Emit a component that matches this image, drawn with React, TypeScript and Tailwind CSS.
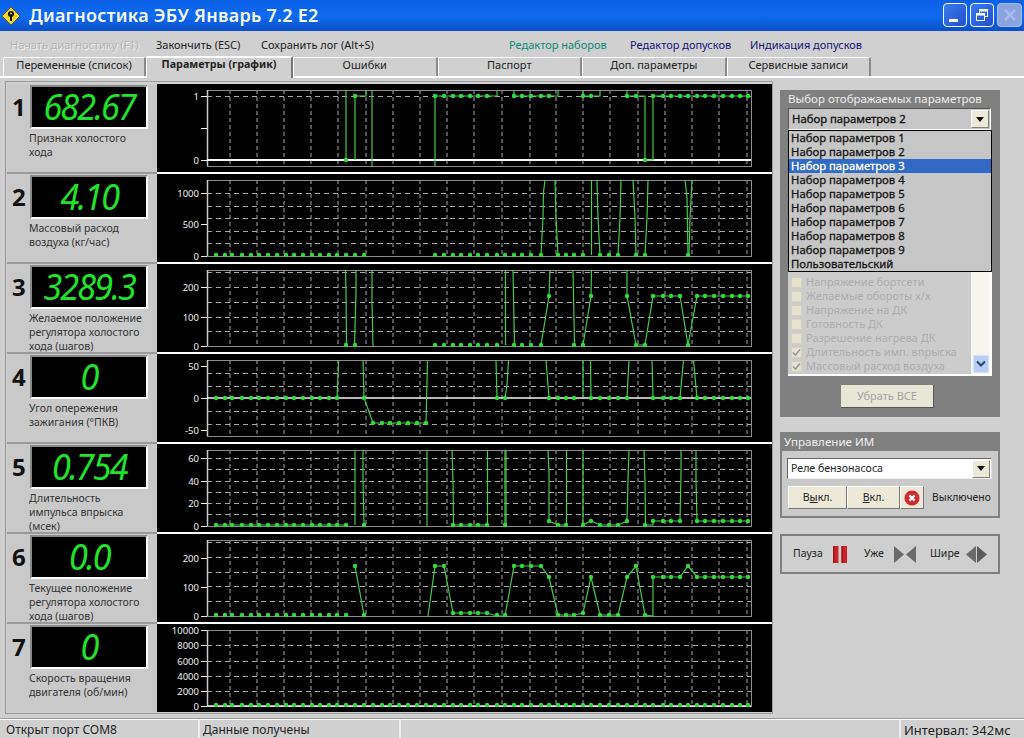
import React from 'react';

// sample positions of the chart, in page pixels
const X = [
  216, 225, 232, 242, 251, 259, 268, 277, 286, 294, 303, 312, 320, 329, 337, 346, 355, 364, 373, 382, 390, 399, 408,
  417, 426, 435, 444, 453, 461, 470, 478, 487, 497, 505, 514, 522, 531, 541, 549, 558, 566, 574, 583, 591, 600, 609,
  618, 627, 636, 645, 653, 663, 671, 680, 688, 697, 705, 714, 723, 732, 740, 748,
];
const GRID_X = [230, 257, 284, 311, 338, 366, 393, 420, 447, 474, 502, 530, 556, 583, 610, 638, 665, 692, 719, 747];
const span = (a: number, b: number) => X.filter((x) => x >= a && x <= b);

type Chart = {
  no: number;
  value: string;
  label: string[];
  top: number;
  bottom: number;
  ticks: { y: number; text?: string }[];
  dashes: number[];
  zero?: { y: number; w: number };
  lines: string[];
  dots: [number, number[]][];
};

const charts: Chart[] = [
  {
    no: 1,
    value: '682.67',
    label: ['Признак холостого', 'хода'],
    top: 90,
    bottom: 166,
    ticks: [{ y: 96, text: '1' }, { y: 128 }, { y: 160, text: '0' }],
    dashes: [96],
    zero: { y: 160, w: 2 },
    lines: [
      '346,160 346,90',
      '355,160 355,96 366,96 366,90',
      '372,90 372,166',
      '435,166 435,96 497,96 497,90',
      '514,90 514,96 558,96 558,90',
      '583,90 583,96 600,96 600,90',
      '627,90 627,96 645,96 645,160 653,160 653,96 748,96',
    ],
    dots: [
      [96, [355, ...span(435, 487), ...span(514, 549), 583, 591, 627, 636, ...span(653, 748)]],
      [160, [346, 645]],
    ],
  },
  {
    no: 2,
    value: '4.10',
    label: ['Массовый расход', 'воздуха (кг/час)'],
    top: 180,
    bottom: 256,
    ticks: [{ y: 193, text: '1000' }, { y: 224, text: '500' }, { y: 256, text: '0' }],
    dashes: [193, 206, 218, 231, 243],
    lines: [
      '541,255 543,218 543.5,192 545,180',
      '555,180 556,218 558,255',
      '591.5,180 591.5,255',
      '597,180 598,218 600,255',
      '621,180 620,218 618,255',
      '633,180 635,218 636,255',
      '648,180 647,218 645,255',
      '685,180 687,198 688,255',
      '692,180 690,218 689,255',
    ],
    dots: [[255, [...span(216, 364), ...span(435, 541), 558, 566, 574, 583, 600, 609, 618, 636, 645, 688]]],
  },
  {
    no: 3,
    value: '3289.3',
    label: ['Желаемое положение', 'регулятора холостого', 'хода (шагов)'],
    top: 270,
    bottom: 346,
    ticks: [{ y: 287, text: '200' }, { y: 317, text: '100' }, { y: 346, text: '0' }],
    dashes: [272, 287, 302, 317, 331],
    lines: [
      '345.5,270 346,292 346.5,346',
      '356,270 356,292 354.5,345',
      '372,270 372,303 373,346',
      '505.5,270 505.5,345',
      '513,270 514.5,345',
      '541,345 549,296 550,270',
      '573,270 574.5,345',
      '583,345 591,296 591.5,270',
      '627,270 627,296 636,345 645,345 653,296 680,296 688,345 697,296 748,296',
    ],
    dots: [
      [345, [346, 355, ...span(435, 497), 514, 522, 531, 541, 574, 583, 636, 645, 688]],
      [296, [549, 591, 627, 653, 663, 671, 680, ...span(697, 748)]],
    ],
  },
  {
    no: 4,
    value: '0',
    label: ['Угол опережения', 'зажигания (°ПКВ)'],
    top: 360,
    bottom: 436,
    ticks: [{ y: 366, text: '50' }, { y: 398, text: '0' }, { y: 430, text: '-50' }],
    dashes: [373, 386, 411, 424],
    zero: { y: 398, w: 1.5 },
    lines: [
      '337,398 338.7,360',
      '363,360 364,398 373,423 426,423 427.5,360',
      '496,360 497,398',
      '505,398 507,385 508.5,360',
      '546,360 549,398',
      '583,360 583,398',
      '590.5,360 591,398',
      '627,398 629,360',
      '652,360 653,398 680,398 683.5,360',
      '693.5,360 697,398',
    ],
    dots: [
      [398, [...span(216, 337), 364, 497, 505, 549, 558, 566, 574, ...span(591, 627), 653, 663, 671, 680, ...span(697, 748)]],
      [423, span(373, 426)],
    ],
  },
  {
    no: 5,
    value: '0.754',
    label: ['Длительность', 'импульса впрыска', '(мсек)'],
    top: 450,
    bottom: 526,
    ticks: [{ y: 458, text: '60' }, { y: 481, text: '40' }, { y: 503, text: '20' }, { y: 526, text: '0' }],
    dashes: [458, 469, 481, 492, 503, 514],
    lines: [
      '216,525 346,525',
      '355,450 355,525',
      '363,450 363,480 364,525',
      '427,450 427,526',
      '452,450 453,483 453.5,525 487,525',
      '487.5,450 487.5,525',
      '505,450 505,525',
      '506,450 506,525',
      '548,450 549,473 549,521 558,525 566,525',
      '566.5,450 566.5,525',
      '583,450 583,525 591,521 600,525 618,525 627,521 628,480 629,450',
      '644,450 645,480 645.5,525 653,525 653,521 680,521 681,473 681,450',
      '696,450 696,480 697,521 748,521',
    ],
    dots: [
      [525, [...span(216, 346), 364, 453, 461, 470, 478, 487, 505, 558, 566, 583, 600, 609, 618, 645]],
      [521, [549, 591, 627, 653, 663, 671, 680, ...span(697, 748)]],
    ],
  },
  {
    no: 6,
    value: '0.0',
    label: ['Текущее положение', 'регулятора холостого', 'хода (шагов)'],
    top: 540,
    bottom: 616,
    ticks: [{ y: 558, text: '200' }, { y: 587, text: '100' }, { y: 616, text: '0' }],
    dashes: [542, 557, 572, 586, 601],
    lines: [
      '355,566 364,615',
      '428,616 435,566 444,566 453,613 487,613 497,616 505,616 514,566 541,566 549,577 558,615 574,615 583,613 591,577 600,615 618,615 627,577 636,566 645,615 653,616 653,577 680,577 688,566 697,577 748,577',
    ],
    dots: [
      [615, [...span(216, 346), 364, 497, 505, 558, 566, 574, 600, 609, 618, 645]],
      [566, [355, 435, 444, 514, 522, 531, 541, 636, 688]],
      [613, [453, 461, 470, 478, 487, 583]],
      [577, [549, 591, 627, 653, 663, 671, 680, ...span(697, 748)]],
    ],
  },
  {
    no: 7,
    value: '0',
    label: ['Скорость вращения', 'двигателя (об/мин)'],
    top: 630,
    bottom: 706,
    ticks: [
      { y: 630, text: '10000' },
      { y: 645, text: '8000' },
      { y: 661, text: '6000' },
      { y: 676, text: '4000' },
      { y: 691, text: '2000' },
      { y: 706, text: '0' },
    ],
    dashes: [645, 661, 676, 691],
    zero: { y: 706, w: 1.5 },
    lines: [],
    dots: [[705, X]],
  },
];

const ChartPlot = ({ c }: { c: Chart }) => {
  const clipId = `plot-${c.no}`;
  const vy = c.top - 6;
  return (
    <svg className="block w-[615px] h-[88px] bg-black" viewBox={`157 ${vy} 615 88`}>
      <clipPath id={clipId}>
        <rect x={207} y={c.top} width={545} height={c.bottom - c.top + 1} />
      </clipPath>
      {GRID_X.map((x) => (
        <line key={x} x1={x} x2={x} y1={c.top} y2={c.bottom} stroke="#a8a8a8" strokeDasharray="4 3" />
      ))}
      {c.dashes.map((y) => (
        <line key={y} x1={207} x2={751} y1={y + 0.5} y2={y + 0.5} stroke="#a8a8a8" strokeDasharray="5 4" />
      ))}
      <rect x={207.5} y={c.top + 0.5} width={544} height={c.bottom - c.top} fill="none" stroke="#8c8c8c" />
      <line x1={207.5} x2={207.5} y1={c.top} y2={c.bottom} stroke="#c8c8c8" strokeWidth={1.5} />
      {c.ticks.map((t) => (
        <g key={t.y}>
          <line x1={201} x2={207} y1={t.y + 0.5} y2={t.y + 0.5} stroke="#e8e8e8" />
          {t.text && (
            <text x={199} y={t.y + 4} textAnchor="end" fill="#f0f0f0" fontSize={9.5}>
              {t.text}
            </text>
          )}
        </g>
      ))}
      {c.zero && <line x1={207} x2={751} y1={c.zero.y} y2={c.zero.y} stroke="#f4f4f4" strokeWidth={c.zero.w} />}
      <g clipPath={`url(#${clipId})`}>
        {c.lines.map((pts) => (
          <polyline key={pts} points={pts} fill="none" stroke="#45c94f" strokeWidth={1.2} />
        ))}
        {c.dots.map(([y, xs]) =>
          xs.map((x) => <circle key={`${x}-${y}`} cx={x} cy={y} r={2.2} fill="#2fdc3c" />),
        )}
      </g>
    </svg>
  );
};

const ChartRow = ({ c, last }: { c: Chart; last: boolean }) => (
  <div className={`flex ${last ? 'h-[88px]' : 'h-[90px]'}`}>
    <div className={`w-[150px] bg-[#c9c9c9] pt-px pl-[5px] ${last ? '' : 'border-b-2 border-[#9a9a9a]'}`}>
      <div className="flex">
        <div className="w-[18px] h-[44px] flex items-center text-[24px] font-bold text-[#111]">{c.no}</div>
        <div className="w-[118px] h-[44px] bg-black border-r-2 border-b-2 border-r-white border-b-white border-l-2 border-t-2 border-l-[#8a8a8a] border-t-[#8a8a8a] flex items-center justify-center">
          <span className="[font-family:'Roboto',sans-serif] italic leading-[36px] text-[36px] tracking-[-2px] text-[#22e32c] scale-x-95">
            {c.value}
          </span>
        </div>
      </div>
      <div className="pl-[17px] pt-[2px] text-[10.5px] leading-[14px] text-[#333] whitespace-nowrap">
        {c.label.map((l) => (
          <div key={l}>{l}</div>
        ))}
      </div>
    </div>
    <div className={last ? '' : 'border-b-2 border-white'}>
      <ChartPlot c={c} />
    </div>
  </div>
);

const ComboArrow = () => (
  <div className="w-[18px] h-[18px] bg-[#ece9d8] border border-t-white border-l-white border-r-[#808080] border-b-[#808080] flex items-center justify-center">
    <svg width="8" height="5" viewBox="0 0 8 5">
      <polygon points="0,0 8,0 4,5" fill="#111" />
    </svg>
  </div>
);

const Check = ({ on }: { on?: boolean }) => (
  <div className="w-[11px] h-[11px] bg-[#e6e2d0] border border-[#d4d0bc] flex items-center justify-center">
    {on && (
      <svg width="9" height="9" viewBox="0 0 9 9">
        <path d="M1 4.5 L3.5 7 L8 1.5" fill="none" stroke="#999" strokeWidth="1.6" />
      </svg>
    )}
  </div>
);

const tabs = ['Переменные (список)', 'Параметры (график)', 'Ошибки', 'Паспорт', 'Доп. параметры', 'Сервисные записи'];
const sets = [1, 2, 3, 4, 5, 6, 7, 8, 9].map((n) => `Набор параметров ${n}`).concat('Пользовательский');
const checks = [
  { t: 'Напряжение бортсети' },
  { t: 'Желаемые обороты х/х' },
  { t: 'Напряжение на ДК' },
  { t: 'Готовность ДК' },
  { t: 'Разрешение нагрева ДК' },
  { t: 'Длительность имп. впрыска', on: true },
  { t: 'Массовый расход воздуха', on: true },
];

export default function App() {
  return (
    <div className="w-[1024px] h-[738px] overflow-hidden bg-[#d0d0d0] [font-family:'Liberation_Sans',sans-serif] flex flex-col text-[11px] text-[#222]">
      {/* Title bar */}
      <div className="h-[31px] shrink-0 bg-gradient-to-b from-[#0a5fe6] via-[#0f6bf2] to-[#0a4fc6] flex items-center pl-[2px] pr-[2px]">
        <svg width="18" height="18" viewBox="0 0 18 18">
          <polygon points="9,0 18,9 9,18 0,9" fill="#f6d52a" stroke="#2a2a10" strokeWidth="0.6" />
          <circle cx="9" cy="7" r="3" fill="#111" />
          <rect x="8" y="8" width="2" height="6" fill="#111" />
          <circle cx="9" cy="6.5" r="1" fill="#f6d52a" />
        </svg>
        <div className="ml-[9px] [font-family:'Open_Sans',sans-serif] font-semibold text-[18px] text-[#f4f8ff] tracking-[0.25px]">
          Диагностика ЭБУ Январь 7.2 E2
        </div>
        <div className="ml-auto flex gap-[3px] pb-px">
          <div className="w-[24px] h-[24px] rounded-[4px] border border-white bg-gradient-to-br from-[#3c7cf0] to-[#1f50c8] flex items-end pl-[5px] pb-[4px]">
            <div className="w-[9px] h-[3px] bg-white" />
          </div>
          <div className="w-[24px] h-[24px] rounded-[4px] border border-white bg-gradient-to-br from-[#3c7cf0] to-[#1f50c8] flex items-center justify-center">
            <svg width="14" height="14" viewBox="0 0 14 14" fill="none" stroke="#fff">
              <rect x="4.5" y="1.5" width="8" height="7" />
              <line x1="4" y1="2.5" x2="13" y2="2.5" strokeWidth="2" />
              <rect x="1.5" y="5.5" width="8" height="7" fill="#2a60d8" />
              <line x1="1" y1="6.5" x2="10" y2="6.5" strokeWidth="2" />
            </svg>
          </div>
          <div className="w-[25px] h-[24px] rounded-[4px] border border-[#a8bce8] bg-[#8ba4e0] flex items-center justify-center">
            <svg width="14" height="14" viewBox="0 0 14 14" stroke="#a9bdea" strokeWidth="2.4">
              <line x1="2" y1="2" x2="12" y2="12" />
              <line x1="12" y1="2" x2="2" y2="12" />
            </svg>
          </div>
        </div>
      </div>

      {/* Menu */}
      <div className="h-[26px] shrink-0 flex items-center pt-[3px] pl-[10px] whitespace-nowrap">
        <span className="w-[146px] text-[#b4b4b4] [text-shadow:1px_1px_0_#eee]">Начать диагностику (F1)</span>
        <span className="w-[105px]">Закончить (ESC)</span>
        <span className="w-[248px]">Сохранить лог (Alt+S)</span>
        <span className="w-[121px] text-[#0b8a78]">Редактор наборов</span>
        <span className="w-[120px] text-[#14147c]">Редактор допусков</span>
        <span className="text-[#14147c]">Индикация допусков</span>
      </div>

      {/* Tabs */}
      <div className="h-[21px] shrink-0 flex items-end pl-[3px] border-b-2 border-white">
        {tabs.map((t, i) =>
          i === 1 ? (
            <div
              key={t}
              className="w-[147px] h-[22px] -mb-[2px] bg-[#d0d0d0] border-t-2 border-l border-white border-r-2 border-r-[#777] flex justify-center text-[10.7px] leading-[13px] font-bold text-[#222]"
            >
              {t}
            </div>
          ) : (
            <div
              key={t}
              className={`${i === 0 ? 'w-[143px]' : 'w-[144.5px]'} h-[19px] border-t border-l border-white border-r-2 border-r-[#8a8a8a] flex justify-center leading-[13px]`}
            >
              {t}
            </div>
          ),
        )}
      </div>

      {/* Body */}
      <div className="flex flex-1 min-h-0">
        <div className="ml-[5px] mt-[3px] h-[633px] w-[768px] border border-[#9a9a9a] pl-px pt-[2px] shrink-0">
          {charts.map((c, i) => (
            <ChartRow key={c.no} c={c} last={i === charts.length - 1} />
          ))}
        </div>

        <div className="ml-[7px] pt-[12px] w-[220px] shrink-0 flex flex-col">
          {/* Parameter sets */}
          <div className="h-[327px] bg-[#808080] pl-[8px] pr-[8px] pt-px">
            <div className="h-[17px] text-[#eee] text-[11.5px] leading-[15px] whitespace-nowrap">Выбор отображаемых параметров</div>
            <div className="w-[203px] h-[22px] bg-[#c6c6c6] border border-t-[#555] border-l-[#555] border-r-white border-b-white flex items-center pl-[3px] pr-[1px] justify-between text-[#111] text-[11.3px]">
              <span className="[-webkit-text-stroke:0.3px_#111]">Набор параметров 2</span>
              <ComboArrow />
            </div>
            <div className="w-[204px] h-[142px] bg-[#c6c6c6] border border-black text-[11.3px] text-[#151515] [-webkit-text-stroke:0.3px_currentColor]">
              {sets.map((s, i) => (
                <div key={s} className={`h-[14px] leading-[14px] pl-[2px] ${i === 2 ? 'bg-[#316ac5] text-white' : ''}`}>
                  {s}
                </div>
              ))}
            </div>
            <div className="w-[204px] h-[104px] bg-[#cccccc] border-b-2 border-r-2 border-white flex overflow-hidden">
              <div className="w-[183px] pt-[3px] pl-[3px]">
                {checks.map((c) => (
                  <div key={c.t} className="h-[14px] leading-[14px] flex items-center gap-[4px] text-[#adadad] whitespace-nowrap">
                    <Check on={c.on} />
                    {c.t}
                  </div>
                ))}
              </div>
              <div className="flex-1 bg-[#f6f6ee] flex items-end justify-center pb-px">
                <div className="w-[16px] h-[18px] rounded-[2px] bg-[#b9cdf2] border border-[#d8e2f8] flex items-center justify-center">
                  <svg width="10" height="8" viewBox="0 0 10 8" fill="none" stroke="#27457a" strokeWidth="2">
                    <path d="M1 1.5 L5 5.5 L9 1.5" />
                  </svg>
                </div>
              </div>
            </div>
            <div className="mt-[9px] ml-[53px] w-[93px] h-[23px] bg-[#e8e6d6] border-r border-b border-r-[#555] border-b-[#555] flex items-center justify-center text-[#a3a3a3]">
              Убрать ВСЕ
            </div>
          </div>

          {/* Actuators */}
          <div className="mt-[15px] h-[86px] border-2 border-[#808080] bg-[#cacaca]">
            <div className="h-[17px] bg-[#808080] text-[#eee] text-[11.6px] pl-[2px] leading-[15px]">Управление ИМ</div>
            <div className="ml-[5px] mt-[7px] w-[205px] h-[21px] bg-white border border-t-[#666] border-l-[#666] border-r-[#ddd] border-b-[#eee] flex items-center justify-between pl-[3px] pr-[1px] text-[10.6px]">
              Реле бензонасоса
              <ComboArrow />
            </div>
            <div className="ml-[6px] mt-[7px] flex items-center text-[10.6px]">
              <div className="w-[59px] h-[23px] bg-[#ece9d8] border border-t-white border-l-white border-r-[#777] border-b-[#777] flex items-center justify-center">
                В<u>ы</u>кл.
              </div>
              <div className="w-[53px] h-[23px] bg-[#ece9d8] border border-t-white border-l-white border-r-[#777] border-b-[#777] flex items-center justify-center">
                <u>В</u>кл.
              </div>
              <div className="w-[24px] h-[23px] bg-[#ece9d8] border border-t-white border-l-white border-r-[#777] border-b-[#777] flex items-center justify-center">
                <svg width="16" height="16" viewBox="0 0 18 18">
                  <circle cx="9" cy="9" r="8.5" fill="#d9252c" />
                  <path d="M6 6 L12 12 M12 6 L6 12" stroke="#fff" strokeWidth="2.6" />
                </svg>
              </div>
              <span className="ml-[8px] text-[10.4px]">Выключено</span>
            </div>
          </div>

          {/* Chart controls */}
          <div className="mt-[16px] h-[40px] border-2 border-[#808080] bg-[#cfcfcf] flex items-center pl-[11px] text-[10.5px]">
            <span className="w-[40px]">Пауза</span>
            <svg width="14" height="17" viewBox="0 0 14 17">
              <rect x="0" y="0" width="5.5" height="17" fill="#cf2027" />
              <rect x="8.5" y="0" width="5.5" height="17" fill="#cf2027" />
              <rect x="0" y="0" width="1.5" height="17" fill="#8c1a1e" />
              <rect x="8.5" y="0" width="1.5" height="17" fill="#8c1a1e" />
            </svg>
            <span className="ml-[17px] w-[30px]">Уже</span>
            <svg width="22" height="17" viewBox="0 0 22 17">
              <polygon points="0,0 10,8.5 0,17" fill="#6a6a6a" />
              <polygon points="22,0 12,8.5 22,17" fill="#6a6a6a" />
            </svg>
            <span className="ml-[14px] w-[36px]">Шире</span>
            <svg width="21" height="17" viewBox="0 0 21 17">
              <polygon points="10,0 0,8.5 10,17" fill="#6a6a6a" />
              <polygon points="11,0 21,8.5 11,17" fill="#5a5a5a" />
            </svg>
          </div>
        </div>
      </div>

      {/* Status bar */}
      <div className="h-[20px] shrink-0 flex border-t border-[#999] text-[12px] text-[#222]">
        <div className="w-[200px] pl-[6px] leading-[20px] border-r-2 border-r-[#eee] border-t border-t-white">Открыт порт COM8</div>
        <div className="w-[201px] pl-[3px] leading-[20px] border-r-2 border-r-[#eee] border-t border-t-white">Данные получены</div>
        <div className="w-[500px] border-r-2 border-r-[#eee] border-t border-t-white" />
        <div className="flex-1 pl-[3px] leading-[20px] text-[13px] border-t border-t-white">Интервал: 342мс</div>
      </div>
    </div>
  );
}
